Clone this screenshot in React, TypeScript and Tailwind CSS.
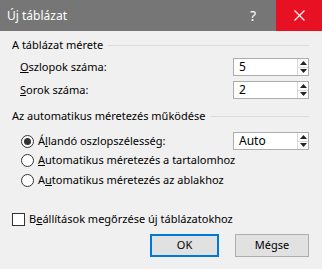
function Spinner({ value }: { value: string }) {
  return (
    <div className="flex h-[18px] w-[76px] border border-[#acacac] bg-white">
      <div className="flex flex-1 items-center pl-[5px] text-[12px] leading-none">{value}</div>
      <div className="flex w-[11px] flex-col border-l border-[#d9d9d9] bg-white">
        <div className="flex flex-1 items-center justify-center border-b border-[#d9d9d9]">
          <svg width="7" height="4" viewBox="0 0 7 4">
            <path d="M0 4 L3.5 0 L7 4 Z" fill="#222" />
          </svg>
        </div>
        <div className="flex flex-1 items-center justify-center">
          <svg width="7" height="4" viewBox="0 0 7 4">
            <path d="M0 0 L7 0 L3.5 4 Z" fill="#222" />
          </svg>
        </div>
      </div>
    </div>
  );
}

function GroupHeader({ children }: { children: React.ReactNode }) {
  return (
    <div className="flex h-[16px] items-center gap-[5px]">
      <span className="whitespace-nowrap">{children}</span>
      <div className="h-px flex-1 bg-[#dcdcdc]" />
    </div>
  );
}

function Radio({ checked, children }: { checked?: boolean; children: React.ReactNode }) {
  return (
    <div className="flex items-center">
      <div className="flex h-[13px] w-[13px] items-center justify-center rounded-full border border-[#333] bg-white">
        {checked && <div className="h-[7px] w-[7px] rounded-full bg-[#333]" />}
      </div>
      <span className="ml-[4px] whitespace-nowrap">{children}</span>
    </div>
  );
}

export default function App() {
  return (
    <div
      className="h-[269px] w-[322px] overflow-hidden bg-[#f0f0f0] text-[11px] text-black"
      style={{ fontFamily: '"Noto Sans", "Open Sans", sans-serif' }}
    >
      <div className="flex h-[31px] items-center bg-[#767676] text-white">
        <span className="pl-[7px] text-[12px]">Új táblázat</span>
        <div className="ml-auto flex h-full w-[46px] items-center justify-center text-[14px]">?</div>
        <div className="flex h-full w-[46px] items-center justify-center bg-[#e81123]">
          <svg width="11" height="11" viewBox="0 0 11 11">
            <path d="M0.5 0.5 L10.5 10.5 M10.5 0.5 L0.5 10.5" stroke="#fff" strokeWidth="1.1" />
          </svg>
        </div>
      </div>

      <div className="pl-[12px] pr-[13px]">
        <div className="mt-[6px]">
          <GroupHeader>A táblázat mérete</GroupHeader>
        </div>
        <div className="mt-[5px] flex h-[18px] items-center justify-between pl-[8px]">
          <span>
            <u>O</u>szlopok száma:
          </span>
          <Spinner value="5" />
        </div>
        <div className="mt-[5px] flex h-[18px] items-center justify-between pl-[8px]">
          <span>
            <u>S</u>orok száma:
          </span>
          <Spinner value="2" />
        </div>

        <div className="mt-[9px]">
          <GroupHeader>Az automatikus méretezés működése</GroupHeader>
        </div>
        <div className="mt-[8px] flex h-[18px] items-center justify-between pl-[9px]">
          <Radio checked>
            Á<u>l</u>landó oszlopszélesség:
          </Radio>
          <Spinner value="Auto" />
        </div>
        <div className="flex h-[20px] items-center pl-[9px]">
          <Radio>
            <u>A</u>utomatikus méretezés a tartalomhoz
          </Radio>
        </div>
        <div className="flex h-[20px] items-center pl-[9px]">
          <Radio>
            A<u>u</u>tomatikus méretezés az ablakhoz
          </Radio>
        </div>

        <div className="mt-[21px] flex h-[16px] items-center">
          <div className="h-[13px] w-[13px] border border-[#333] bg-white" />
          <span className="ml-[4px]">
            B<u>e</u>állítások megőrzése új táblázatokhoz
          </span>
        </div>

        <div className="mt-[7px] flex justify-end gap-[16px]">
          <button className="flex h-[23px] w-[69px] items-center justify-center border-2 border-[#0078d7] bg-[#e1e1e1]">
            OK
          </button>
          <button className="flex h-[23px] w-[74px] items-center justify-center border border-[#adadad] bg-[#e1e1e1]">
            Mégse
          </button>
        </div>
      </div>
    </div>
  );
}
